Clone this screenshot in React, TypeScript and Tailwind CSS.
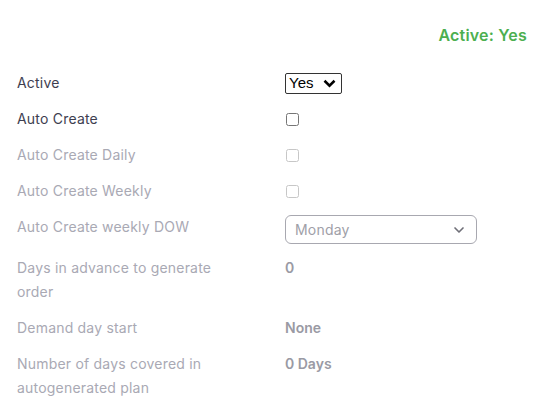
import { ChevronDown } from "lucide-react";

type RowProps = {
  label: string;
  muted?: boolean;
  children: React.ReactNode;
};

const Row = ({ label, muted, children }: RowProps) => (
  <div className="flex items-start">
    <div
      className={`w-[268px] pr-[48px] text-[14px] leading-6 tracking-[0.2px] ${
        muted ? "text-[#a9a9b4]" : "text-[#3e3e50]"
      }`}
    >
      {label}
    </div>
    <div className="flex-1 min-h-6 flex items-start">{children}</div>
  </div>
);

const Value = ({ text }: { text: string }) => (
  <span className="text-[14px] leading-6 font-semibold text-[#9a9aa4]">{text}</span>
);

export default function App() {
  return (
    <div
      className="w-[538px] h-[417px] bg-white px-[17px] pt-[23px]"
      style={{ fontFamily: "Inter, 'Noto Sans', sans-serif" }}
    >
      <div className="flex justify-end mr-[-6px]">
        <span className="text-[16px] leading-6 font-semibold tracking-[0.2px] text-[#4caf50]">Active: Yes</span>
      </div>

      <div className="mt-6 flex flex-col gap-3">
        <Row label="Active">
          <div className="h-6 flex items-center">
            <div
              className="h-[21px] w-[57px] border border-[#333] rounded-[2px] flex items-center justify-between pl-[3px] pr-[4px] text-[15px] text-black"
              style={{ fontFamily: "'Liberation Sans', Arial, sans-serif" }}
            >
              <span>Yes</span>
              <svg width="13" height="9" viewBox="0 0 13 9" className="mr-px">
                <path d="M1.5 1.8 L6.5 6.6 L11.5 1.8" fill="none" stroke="#000" strokeWidth="2.6" />
              </svg>
            </div>
          </div>
        </Row>

        <Row label="Auto Create">
          <div className="h-6 flex items-center">
            <input type="checkbox" className="m-0 ml-px w-[13px] h-[13px]" />
          </div>
        </Row>

        <Row label="Auto Create Daily" muted>
          <div className="h-6 flex items-center">
            <input type="checkbox" className="m-0 ml-px w-[13px] h-[13px] opacity-40" />
          </div>
        </Row>

        <Row label="Auto Create Weekly" muted>
          <div className="h-6 flex items-center">
            <input type="checkbox" className="m-0 ml-px w-[13px] h-[13px] opacity-40" />
          </div>
        </Row>

        <Row label="Auto Create weekly DOW" muted>
          <div className="h-[29px] w-[192px] border border-[#a8a8b0] rounded-md flex items-center justify-between pl-[9px] pr-[9px] text-[14px] tracking-[0.2px] text-[#a0a0a8]">
            <span>Monday</span>
            <ChevronDown size={16} strokeWidth={2.5} className="text-[#6f6f78]" />
          </div>
        </Row>

        <Row label="Days in advance to generate order" muted>
          <Value text="0" />
        </Row>

        <Row label="Demand day start" muted>
          <Value text="None" />
        </Row>

        <Row label="Number of days covered in autogenerated plan" muted>
          <Value text="0 Days" />
        </Row>
      </div>
    </div>
  );
}
